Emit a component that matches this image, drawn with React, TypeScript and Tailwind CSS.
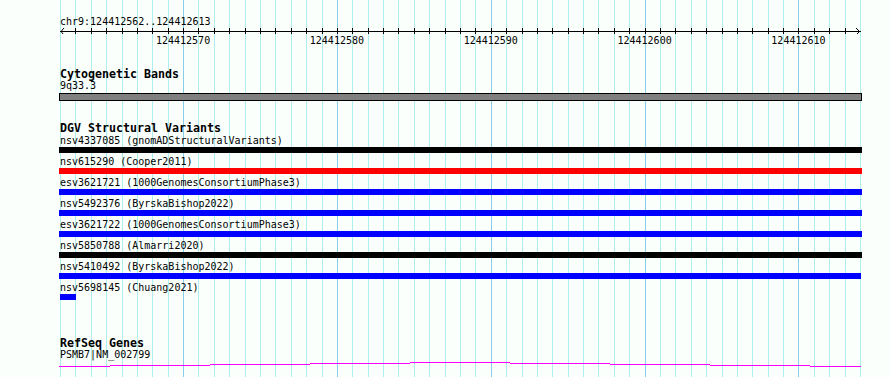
import React from "react";

const BASES = 52;
const TRACK_LEFT = 60;
const TRACK_W = 800;
const STEP = TRACK_W / BASES;
const gridXs = Array.from({ length: BASES + 1 }, (_, i) => Math.round(TRACK_LEFT + i * STEP));

const rows: { label: string; color: string; w: string }[] = [
  { label: "nsv4337085 (gnomADStructuralVariants)", color: "bg-[#000000]", w: "w-[803px] -ml-px" },
  { label: "nsv615290 (Cooper2011)", color: "bg-[#ff0000]", w: "w-[803px] -ml-px" },
  { label: "esv3621721 (1000GenomesConsortiumPhase3)", color: "bg-[#0000ff]", w: "w-[803px] -ml-px" },
  { label: "nsv5492376 (ByrskaBishop2022)", color: "bg-[#0000ff]", w: "w-[803px] -ml-px" },
  { label: "esv3621722 (1000GenomesConsortiumPhase3)", color: "bg-[#0000ff]", w: "w-[803px] -ml-px" },
  { label: "nsv5850788 (Almarri2020)", color: "bg-[#000000]", w: "w-[803px] -ml-px" },
  { label: "nsv5410492 (ByrskaBishop2022)", color: "bg-[#0000ff]", w: "w-[802px] -ml-px" },
  { label: "nsv5698145 (Chuang2021)", color: "bg-[#0000ff]", w: "w-[16px]" },
];

const tickLabels = ["124412570", "124412580", "124412590", "124412600", "124412610"];

const magenta: [number, number, number][] = [
  [59, 110, 6],
  [110, 210, 5],
  [210, 310, 4],
  [310, 410, 3],
  [410, 510, 2],
  [510, 610, 3],
  [610, 710, 4],
  [710, 810, 5],
  [810, 861, 6],
];

function Grid() {
  return (
    <svg
      className="absolute left-0 top-0"
      width={890}
      height={377}
      shapeRendering="crispEdges"
    >
      {gridXs.map((x, i) => {
        const major = i % 10 === 8;
        return (
          <rect
            key={i}
            x={x}
            y={0}
            width={1}
            height={377}
            fill={major ? "#87ceeb" : "#afeeee"}
          />
        );
      })}
    </svg>
  );
}

function Ruler() {
  return (
    <svg
      className="block -ml-[60px] mt-px"
      width={890}
      height={6}
      shapeRendering="crispEdges"
    >
      <rect x={60} y={3} width={801} height={1} fill="#000" />
      {gridXs.slice(1, -1).map((x, i) => (
        <rect key={i} x={x} y={0} width={1} height={6} fill="#000" />
      ))}
      <polyline points="64,0 61,3.5 64,7" fill="none" stroke="#000" strokeWidth={1} shapeRendering="auto" />
      <polyline points="856,0 859.5,3.5 856,7" fill="none" stroke="#000" strokeWidth={1} shapeRendering="auto" />
    </svg>
  );
}

export default function App() {
  const reg = "text-[10px] leading-[11px] h-[11px] whitespace-pre";
  const bold = "text-[11.63px] leading-[12px] h-[12px] font-bold whitespace-pre";
  return (
    <div
      className="relative w-[890px] h-[377px] overflow-hidden bg-[#fbfffb] text-black"
      style={{ fontFamily: "'DejaVu Sans Mono', 'Liberation Mono', monospace" }}
    >
      <Grid />
      <div className="relative flex flex-col pl-[60px]">
        <div className={`${reg} mt-[16px]`}>chr9:124412562..124412613</div>
        <Ruler />
        <div className="flex mt-px ml-[46.15px]">
          {tickLabels.map((t) => (
            <div key={t} className={`${reg} w-[153.846px] shrink-0 text-center`}>
              {t}
            </div>
          ))}
        </div>

        <div className={`${bold} mt-[22px]`}>Cytogenetic Bands</div>
        <div className={reg}>9q33.3</div>
        <div className="mt-[2px] -ml-px w-[803px] h-[8px] border border-black bg-[#808080]" />

        <div className={`${bold} mt-[21px]`}>DGV Structural Variants</div>
        <div className="flex flex-col mt-px">
          {rows.map((r) => (
            <div key={r.label} className="flex flex-col mb-[3px]">
              <div className={reg}>{r.label}</div>
              <div className={`mt-px h-[6px] ${r.w} ${r.color}`} />
            </div>
          ))}
        </div>

        <div className={`${bold} mt-[34px]`}>RefSeq Genes</div>
        <div className={reg}>PSMB7|NM_002799</div>
        <svg
          className="block -ml-[60px]"
          width={890}
          height={8}
          shapeRendering="crispEdges"
        >
          {magenta.map(([a, b, y], i) => (
            <rect key={i} x={a} y={y} width={b - a} height={1} fill="#ff00ff" />
          ))}
        </svg>
      </div>
    </div>
  );
}
